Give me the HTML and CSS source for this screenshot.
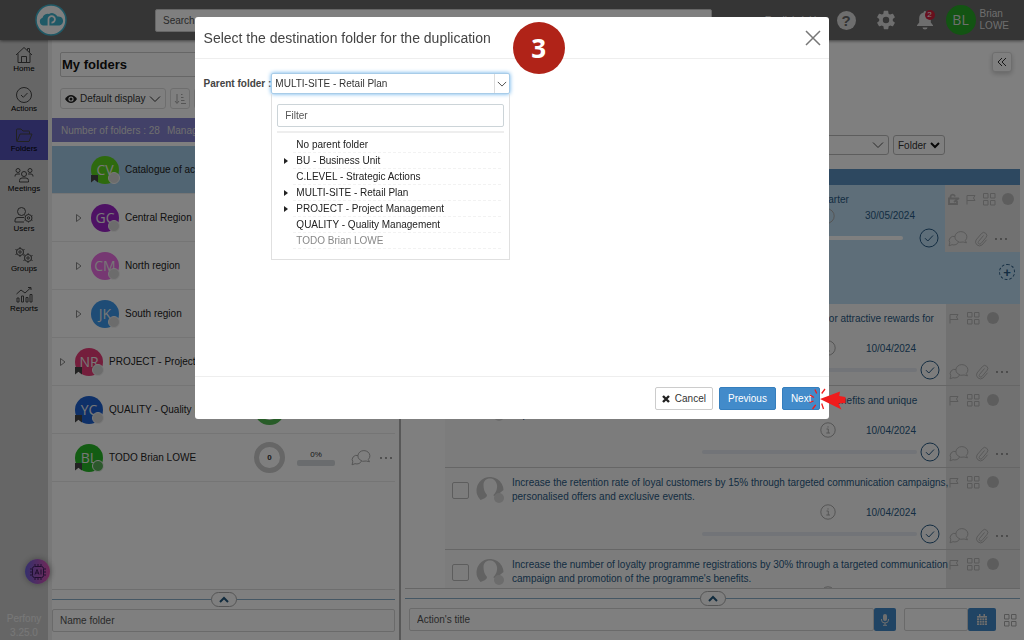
FILE: index.html
```html
<!DOCTYPE html>
<html lang="en">
<head>
    <meta charset="utf-8">
    <title>Perfony - My folders</title>
    <link rel="stylesheet" href="styles.css">
</head>
<body>
    <svg class="sprite" aria-hidden="true">
        <symbol id="chat" viewBox="0 0 20 16"><path d="M8.500 9.500A6 5.300 0 1 1 17.300 9.500L18.500 11.800L15.200 11A6 5.300 0 0 1 8.500 9.500M7 5.500A4.500 4.300 0 0 0 1.800 11.800L1 14.800L4 13.700A5 4.300 0 0 0 10.500 11"/></symbol>
        <symbol id="clip" viewBox="0 0 14 16"><path d="M9.500 4.500L4.500 10.500A1.500 1.500 0 0 0 7 12.500L12 6.500A3 3 0 0 0 7.500 2.500L2 9A4 4 0 0 0 8 14L12.500 8.800"/></symbol>
        <symbol id="flag" viewBox="0 0 10 12"><path d="M1 11.500V2.500H9L7.500 5L9 7.500H1"/></symbol>
        <symbol id="grid" viewBox="0 0 14 14"><path d="M1.500 1.500H6V6H1.500ZM8.500 1.500H13V6H8.500ZM1.500 8.500H6V13H1.500ZM8.500 8.500H13V13H8.500Z"/></symbol>
        <symbol id="dots" viewBox="0 0 14 4"><circle cx="2" cy="2" r=".9"/><circle cx="7" cy="2" r=".9"/><circle cx="12" cy="2" r=".9"/></symbol>
        <symbol id="check" viewBox="0 0 20 20"><circle cx="10" cy="10" r="9"/><path d="M6 10.200L8.800 13L14 7.500"/></symbol>
        <symbol id="info" viewBox="0 0 16 16"><circle cx="8" cy="8" r="7.200"/><path d="M6.500 7H8.300V11M6.300 11H10M8 4.300V5.600"/></symbol>
        <symbol id="down" viewBox="0 0 12 8"><path d="M1 1.500L6 6.500L11 1.500"/></symbol>
        <symbol id="up" viewBox="0 0 10 8"><path d="M1 6L5 2L9 6"/></symbol>
        <symbol id="tri" viewBox="0 0 8 10"><path d="M1.500 1.500L6 5L1.500 8.500Z"/></symbol>
        <symbol id="person" viewBox="0 0 28 28"><path d="M4.500 24A13.500 13.500 0 1 1 27.500 14L22 18.500C20 20 17.500 20.500 17.500 19C20 16.500 21.500 13 21 9C20 4 17 2.500 14 2.500C10 2.500 7.500 5 7.500 9C7.500 13 8.500 16 11 19C11 21.500 8 22.500 4.500 24Z"/><circle cx="23" cy="22" r="5" fill="#d8d8d8"/></symbol>
        <symbol id="gear" viewBox="0 0 24 24"><path d="M19.400 13a7.500 7.500 0 0 0 0-2l2.100-1.600a.5.5 0 0 0 .1-.7l-2-3.400a.5.5 0 0 0-.6-.2l-2.500 1a7.300 7.300 0 0 0-1.700-1l-.4-2.600A.5.5 0 0 0 14 2h-4a.5.5 0 0 0-.5.400l-.4 2.700a7.300 7.300 0 0 0-1.600 1l-2.500-1a.5.5 0 0 0-.6.200l-2 3.400a.5.500 0 0 0 .1.700L4.600 11a7.500 7.500 0 0 0 0 2l-2.100 1.600a.5.500 0 0 0-.1.700l2 3.400a.5.500 0 0 0 .6.200l2.500-1a7.300 7.300 0 0 0 1.700 1l.4 2.700a.5.500 0 0 0 .4.400h4a.5.500 0 0 0 .5-.4l.4-2.700a7.300 7.300 0 0 0 1.600-1l2.500 1a.5.500 0 0 0 .6-.2l2-3.400a.5.500 0 0 0-.1-.7zM12 15.500a3.500 3.500 0 1 1 0-7 3.500 3.500 0 0 1 0 7z"/></symbol>
    </svg>

    <header class="topbar">
        <a class="logo" href="#" aria-label="Perfony">
            <svg width="32" height="32" viewBox="0 0 32 32">
                <circle cx="16" cy="16" r="15" fill="#fff" stroke="#3fb2cc" stroke-width="1.500"/>
                <path d="M8 21.500A4 4 0 0 1 7.500 13.800A5.500 5.500 0 0 1 14 10A6 6 0 0 1 22.500 12.500A4.600 4.600 0 0 1 24.500 21.500Z" fill="#3fb2cc"/>
                <path d="M13.500 22V15.500A3.200 3.200 0 1 1 16.500 18.600" fill="none" stroke="#fff" stroke-width="1.800"/>
            </svg>
        </a>
        <input class="search" type="text" placeholder="Search..." aria-label="Search">
        <div class="top-tools">
            <a class="lang" href="#">English (uk)</a>
            <button class="icon-btn" aria-label="Help"><span class="help">?</span></button>
            <button class="icon-btn" aria-label="Settings"><svg class="solid" width="22" height="22"><use href="#gear"/></svg></button>
            <button class="icon-btn bell" aria-label="Notifications">
                <svg class="solid" width="18" height="20" viewBox="0 0 18 20"><path d="M9 1A1.300 1.300 0 0 1 10.300 2.500A5.800 5.800 0 0 1 14.800 8V12.500L17 15.200V16H1V15.200L3.200 12.500V8A5.800 5.800 0 0 1 7.700 2.500A1.300 1.300 0 0 1 9 1ZM6.500 17.500H11.500A2.500 2 0 0 1 6.500 17.500Z"/></svg>
                <span class="count">2</span>
            </button>
            <a class="profile" href="#"><span class="avatar-lg">BL</span><span>Brian<br>LOWE</span></a>
        </div>
    </header>

    <div class="main">
        <nav class="sidebar">
            <a href="#"><svg class="line" width="18" height="18" viewBox="0 0 18 18"><path d="M1 9L9 1.500L17 9M3 7.500V16.500H15V7.500M12.500 4.500V2.500H14.500V6.500M6.500 16.500V10.500H11.500V16.500"/></svg>Home</a>
            <a href="#"><svg class="line" width="18" height="18" viewBox="0 0 18 18"><circle cx="9" cy="9" r="7.500"/><path d="M6 9L8.300 11.300L12.500 7"/></svg>Actions</a>
            <a href="#" class="active"><svg class="line" width="18" height="18" viewBox="0 0 18 18"><path d="M1.500 14.500V4Q1.500 3 2.500 3H6L8 5H13.500Q14.500 5 14.500 6V8M1.500 14.500Q1.500 15.500 2.500 15.500H14L17 8H5L2 15.500"/></svg>Folders</a>
            <a href="#"><svg class="line" width="20" height="18" viewBox="0 0 20 18"><circle cx="10" cy="8" r="2.500"/><circle cx="4" cy="4.500" r="2"/><circle cx="16" cy="4.500" r="2"/><path d="M5.500 16V14.500Q5.500 12 8 12H12Q14.500 12 14.500 14.500V16ZM1 10.500V10Q1 8 3 8H6M19 10.500V10Q19 8 17 8H14"/></svg>Meetings</a>
            <a href="#"><svg class="line" width="20" height="18" viewBox="0 0 20 18"><circle cx="7.500" cy="5.500" r="4"/><path d="M10 16H1V14Q1 11.500 4 11.500H10"/><circle cx="14.500" cy="12" r="3.500"/><circle cx="14.500" cy="12" r="1.200"/><path d="M14.500 7.500V8.500M14.500 15.500V16.500M10.500 9.800L11.500 10.300M17.500 13.700L18.500 14.200M10.500 14.200L11.500 13.700M17.500 10.300L18.500 9.800"/></svg>Users</a>
            <a href="#"><svg class="line" width="20" height="18" viewBox="0 0 20 18"><circle cx="6" cy="6" r="3.500"/><circle cx="6" cy="6" r="1.200"/><circle cx="14" cy="12" r="3.500"/><circle cx="14" cy="12" r="1.200"/><path d="M6 1V2.500M6 9.500V11M1.500 3.500L3 4.300M9 7.700L10.500 8.500M1.500 8.500L3 7.700M9 4.300L10.500 3.500M14 7V8.500M14 15.500V17M9.500 14.500L11 13.700M17 10.300L18.500 9.500M9.500 9.500L11 10.300M17 13.700L18.500 14.500"/></svg>Groups</a>
            <a href="#"><svg class="line" width="18" height="18" viewBox="0 0 18 18"><path d="M2 16V12H4V16ZM6.500 16V10H8.500V16ZM11 16V11.500H13V16ZM15 16V8.500H17V16ZM1.500 8L6 4L10 7L16 1.500M13 1.500H16V4"/></svg>Reports</a>
            <div class="ai">
                <svg class="line" width="18" height="18" viewBox="0 0 18 18"><rect x="3.500" y="3.500" width="11" height="11" rx="2"/><path d="M6 1V3M9 1V3M12 1V3M6 15V17M9 15V17M12 15V17M1 6H3M1 9H3M1 12H3M15 6H17M15 9H17M15 12H17M6 11.500L8 6.500L10 11.500M6.700 10H9.300M12 6.500V11.500"/></svg>
            </div>
            <p class="version">Perfony<br>3.25.0</p>
        </nav>

        <section class="folders">
            <input class="view-name" type="text" value="My folders" aria-label="View name">
            <div class="view-tools">
                <button class="display-btn">
                    <svg width="12" height="10" viewBox="0 0 12 10"><path d="M0 5Q2.500 1 6 1T12 5Q9.500 9 6 9T0 5Z" fill="#222"/><circle cx="6" cy="5" r="2.600" fill="#fff"/><circle cx="6" cy="5" r="1.500" fill="#222"/></svg>
                    Default display
                    <svg class="line" width="12" height="8"><use href="#down"/></svg>
                </button>
                <button class="sort-btn" aria-label="Sort"><svg class="line" width="12" height="12" viewBox="0 0 12 12"><path d="M3 1V10M1 8L3 10.500L5 8M7 10.500H12M7 7.500H10.500M7 4.500H9.500M7 1.500H8.500"/></svg></button>
                <button class="sort-btn" aria-label="Options"></button>
            </div>
            <div class="count-bar"><span>Number of folders : 28</span><span>Manage</span></div>
            <ul class="folder-list">
                <li class="sub selected"><span class="avatar green-light mark">CV<i></i></span><span class="name">Catalogue of actions</span></li>
                <li class="sub"><svg class="tri" width="8" height="10"><use href="#tri"/></svg><span class="avatar purple">GC<i></i></span><span class="name">Central Region</span></li>
                <li class="sub"><svg class="tri" width="8" height="10"><use href="#tri"/></svg><span class="avatar pink">CM<i></i></span><span class="name">North region</span></li>
                <li class="sub"><svg class="tri" width="8" height="10"><use href="#tri"/></svg><span class="avatar sky">JK<i></i></span><span class="name">South region</span></li>
                <li><svg class="tri" width="8" height="10"><use href="#tri"/></svg><span class="avatar rose mark">NR<i></i></span><span class="name">PROJECT - Project...</span></li>
                <li>
                    <span class="avatar blue mark">YC<i></i></span><span class="name">QUALITY - Quality M...</span>
                    <span class="ring ring-green">4</span>
                    <span class="rate">40%<b><em style="width: 40%"></em></b></span>
                    <svg class="line pale" width="20" height="16"><use href="#chat"/></svg><svg class="dots" width="14" height="4"><use href="#dots"/></svg>
                </li>
                <li>
                    <span class="avatar green mark online">BL<i></i></span><span class="name">TODO Brian LOWE</span>
                    <span class="ring">0</span>
                    <span class="rate">0%<b></b></span>
                    <svg class="line pale" width="20" height="16"><use href="#chat"/></svg><svg class="dots" width="14" height="4"><use href="#dots"/></svg>
                </li>
            </ul>
            <div class="fold"><button aria-label="Expand"><svg width="10" height="8"><use href="#up"/></svg></button></div>
            <input class="field" type="text" placeholder="Name folder" aria-label="Name folder">
        </section>

        <section class="actions">
            <button class="collapse" aria-label="Collapse"><svg class="line" width="10" height="10" viewBox="0 0 10 10"><path d="M5 1L1 5L5 9M9 1L5 5L9 9"/></svg></button>
            <div class="filters">
                <select class="wide" aria-label="Filter actions"><option></option></select>
                <select class="scope" aria-label="Scope"><option>Folder</option></select>
            </div>
            <div class="blue-bar"></div>
            <div class="task-list">
                <article class="task current">
                    <div class="task-body">
                        <p class="task-title">Increase the sales of the retail network by 10% before the end of the quarter</p>
                        <div class="task-date"><svg class="line" width="16" height="16"><use href="#info"/></svg><time>30/05/2024</time></div>
                        <div class="task-progress"><b></b><svg class="line" width="20" height="20"><use href="#check"/></svg></div>
                    </div>
                    <div class="task-tools">
                        <div>
                            <svg class="line" width="12" height="12" viewBox="0 0 12 12"><path d="M1 5.500H9V11H1ZM2.500 5.500V3.500A2.300 2.300 0 0 1 7 3.500M6 9L11 5" stroke-width="1.800"/></svg>
                            <svg class="line" width="10" height="12"><use href="#flag"/></svg><svg class="line" width="14" height="14"><use href="#grid"/></svg><span class="dot"></span>
                        </div>
                        <div><svg class="line" width="20" height="16"><use href="#chat"/></svg><svg class="line" width="14" height="16"><use href="#clip"/></svg><svg class="dots" width="14" height="4"><use href="#dots"/></svg></div>
                    </div>
                </article>
                <div class="task-add"><button aria-label="Add action">+</button></div>
                <article class="task">
                    <div class="task-body">
                        <label class="pick"><input type="checkbox" aria-label="Select action"><svg width="28" height="28"><use href="#person"/></svg></label>
                        <p class="task-title">Set up a sponsorship scheme for the regular customers, with discounts or attractive rewards for<br>each new member.</p>
                        <div class="task-date"><svg class="line" width="16" height="16"><use href="#info"/></svg><time>10/04/2024</time></div>
                        <div class="task-progress"><b></b><svg class="line" width="20" height="20"><use href="#check"/></svg></div>
                    </div>
                    <div class="task-tools">
                        <div><svg class="line" width="10" height="12"><use href="#flag"/></svg><svg class="line" width="14" height="14"><use href="#grid"/></svg><span class="dot"></span></div>
                        <div><svg class="line" width="20" height="16"><use href="#chat"/></svg><svg class="line" width="14" height="16"><use href="#clip"/></svg><svg class="dots" width="14" height="4"><use href="#dots"/></svg></div>
                    </div>
                </article>
                <article class="task">
                    <div class="task-body">
                        <label class="pick"><input type="checkbox" aria-label="Select action"><svg width="28" height="28"><use href="#person"/></svg></label>
                        <p class="task-title">Launch a new loyalty programme in every regional shop, with exclusive benefits and unique<br>experiences.</p>
                        <div class="task-date"><svg class="line" width="16" height="16"><use href="#info"/></svg><time>10/04/2024</time></div>
                        <div class="task-progress"><b></b><svg class="line" width="20" height="20"><use href="#check"/></svg></div>
                    </div>
                    <div class="task-tools">
                        <div><svg class="line" width="10" height="12"><use href="#flag"/></svg><svg class="line" width="14" height="14"><use href="#grid"/></svg><span class="dot"></span></div>
                        <div><svg class="line" width="20" height="16"><use href="#chat"/></svg><svg class="line" width="14" height="16"><use href="#clip"/></svg><svg class="dots" width="14" height="4"><use href="#dots"/></svg></div>
                    </div>
                </article>
                <article class="task">
                    <div class="task-body">
                        <label class="pick"><input type="checkbox" aria-label="Select action"><svg width="28" height="28"><use href="#person"/></svg></label>
                        <p class="task-title">Increase the retention rate of loyal customers by 15% through targeted communication campaigns,<br>personalised offers and exclusive events.</p>
                        <div class="task-date"><svg class="line" width="16" height="16"><use href="#info"/></svg><time>10/04/2024</time></div>
                        <div class="task-progress"><b></b><svg class="line" width="20" height="20"><use href="#check"/></svg></div>
                    </div>
                    <div class="task-tools">
                        <div><svg class="line" width="10" height="12"><use href="#flag"/></svg><svg class="line" width="14" height="14"><use href="#grid"/></svg><span class="dot"></span></div>
                        <div><svg class="line" width="20" height="16"><use href="#chat"/></svg><svg class="line" width="14" height="16"><use href="#clip"/></svg><svg class="dots" width="14" height="4"><use href="#dots"/></svg></div>
                    </div>
                </article>
                <article class="task">
                    <div class="task-body">
                        <label class="pick"><input type="checkbox" aria-label="Select action"><svg width="28" height="28"><use href="#person"/></svg></label>
                        <p class="task-title">Increase the number of loyalty programme registrations by 30% through a targeted communication<br>campaign and promotion of the programme's benefits.</p>
                        <div class="task-date"><svg class="line" width="16" height="16"><use href="#info"/></svg></div>
                    </div>
                    <div class="task-tools">
                        <div><svg class="line" width="10" height="12"><use href="#flag"/></svg><svg class="line" width="14" height="14"><use href="#grid"/></svg><span class="dot"></span></div>
                    </div>
                </article>
            </div>
            <div class="fold"><button aria-label="Expand"><svg width="10" height="8"><use href="#up"/></svg></button></div>
            <form class="new-action">
                <input class="field title-field" type="text" placeholder="Action's title" aria-label="Action's title">
                <button type="button" class="mic" aria-label="Dictate"><svg width="10" height="12" viewBox="0 0 10 12"><rect x="3" y="0" width="4" height="7" rx="2" fill="#ddd"/><path d="M1.500 5V6A3.500 3 0 0 0 8.500 6V5M5 9V11M3 11.300H7" fill="none" stroke="#ddd"/></svg></button>
                <input class="field date-field" type="text" aria-label="Due date">
                <button type="button" class="calendar" aria-label="Pick a date"><svg width="10" height="11" viewBox="0 0 10 11"><path d="M0 2H10V11H0ZM2 0H3.500V2H2ZM6.500 0H8V2H6.500Z" fill="#ddd"/><path d="M0 4H10M0 6.500H10M0 9H10M2.500 4V11M5 4V11M7.500 4V11" stroke="#337ab7" stroke-width=".6"/></svg></button>
                <svg class="line pale" width="14" height="14"><use href="#grid"/></svg>
            </form>
        </section>
    </div>

    <div class="overlay">
        <div class="modal" role="dialog" aria-labelledby="modal-title">
            <div class="modal-header">
                <h2 id="modal-title">Select the destination folder for the duplication</h2>
                <button class="close" aria-label="Close"><svg width="16" height="16" viewBox="0 0 16 16"><path d="M1 1L15 15M15 1L1 15"/></svg></button>
                <span class="step">3</span>
            </div>
            <div class="modal-body">
                <label for="parent">Parent folder :</label>
                <div class="combo">
                    <select id="parent"><option>MULTI-SITE - Retail Plan</option></select>
                    <span class="combo-arrow"><svg class="line" width="10" height="8" viewBox="0 0 12 8"><use href="#down"/></svg></span>
                    <div class="combo-panel">
                        <input class="field" type="text" placeholder="Filter" aria-label="Filter">
                        <ul>
                            <li>No parent folder</li>
                            <li class="parent">BU - Business Unit</li>
                            <li>C.LEVEL - Strategic Actions</li>
                            <li class="parent">MULTI-SITE - Retail Plan</li>
                            <li class="parent">PROJECT - Project Management</li>
                            <li>QUALITY - Quality Management</li>
                            <li class="disabled">TODO Brian LOWE</li>
                        </ul>
                    </div>
                </div>
            </div>
            <div class="modal-footer">
                <button class="btn"><svg width="8" height="8" viewBox="0 0 8 8"><path d="M1 1L7 7M7 1L1 7" stroke="#222" stroke-width="2.400"/></svg>Cancel</button>
                <button class="btn primary">Previous</button>
                <button class="btn primary">Next</button>
                <svg class="pointer" width="42" height="28" viewBox="0 0 42 28">
                    <path d="M14 14L34 6.500L33.200 11L39.500 12V18L32.500 18.500L35.500 24.500Z" fill="#f01c1c"/>
                    <path d="M9 4.500L10.700 8.500M19 4L15.700 8.500M4 10L8 12.500M3.500 17.500L7.500 16M6.500 24L9.700 19.800M15.700 18.500L17.500 24" fill="none" stroke="#f01c1c" stroke-width="1.300"/>
                </svg>
            </div>
        </div>
    </div>
</body>
</html>
```

FILE: styles.css
```css
* {
    box-sizing: border-box;
}

body {
    display: flex;
    flex-direction: column;
    height: 100vh;
    margin: 0;
    overflow: hidden;
    background-color: #fff;
    color: #333;
    font-family: "Liberation Sans", Arial, sans-serif;
    font-size: 10px;
}

button, input, select {
    font: inherit;
    color: inherit;
}

button {
    cursor: pointer;
}

a {
    color: inherit;
    text-decoration: none;
}

p, h2, ul {
    margin: 0;
    padding: 0;
    list-style: none;
}

svg {
    flex: none;
    display: block;
}

.sprite {
    position: absolute;
    width: 0;
    height: 0;
}

.line {
    fill: none;
    stroke: currentColor;
    stroke-width: 1;
}

.pale {
    color: #aaa;
}

/* top bar */
.topbar {
    display: flex;
    align-items: center;
    flex: none;
    height: 40px;
    padding: 0 15px 0 35px;
    background-color: #6a6a6a;
    color: #ddd;
    box-shadow: 0 1px 3px rgba(0, 0, 0, 0.5);
    z-index: 1;
}

.search {
    width: 557px;
    height: 23px;
    margin-left: 88px;
    padding: 0 7px;
    border: 1px solid #ccc;
    border-radius: 2px;
    background-color: #fff;
}

.top-tools {
    display: flex;
    align-items: center;
    gap: 19px;
    margin-left: auto;
}

.icon-btn {
    position: relative;
    display: flex;
    padding: 0;
    border: none;
    background: none;
    color: #ddd;
}

.solid {
    fill: currentColor;
}

.help {
    width: 19px;
    height: 19px;
    border-radius: 50%;
    background-color: #ddd;
    color: #666;
    font-size: 15px;
    font-weight: bold;
    line-height: 19px;
}

.count {
    position: absolute;
    top: 0;
    right: -1px;
    width: 10px;
    height: 10px;
    border-radius: 50%;
    background-color: #d0203c;
    color: #fff;
    font-size: 8px;
    line-height: 10px;
}

.profile {
    display: flex;
    align-items: center;
    gap: 4px;
    margin-left: -7px;
    line-height: 12px;
}

.avatar-lg {
    width: 30px;
    height: 30px;
    border-radius: 50%;
    background-color: #26a826;
    font: 14px/30px "Open Sans", sans-serif;
    text-align: center;
}

.main {
    display: flex;
    flex: 1;
    min-height: 0;
    background-color: #f0f0f0;
}

/* sidebar */
.sidebar {
    position: relative;
    display: flex;
    flex-direction: column;
    flex: none;
    width: 48px;
    background-color: #cdcdcd;
    color: #000;
    font-size: 8px;
    text-align: center;
}

.sidebar a {
    display: flex;
    flex-direction: column;
    align-items: center;
    height: 40px;
    padding-top: 6px;
    line-height: 9px;
}

.sidebar a svg {
    color: #444;
}

.sidebar .active {
    background-color: #5452b8;
}

.ai {
    position: absolute;
    right: -2px;
    bottom: 56px;
    display: flex;
    align-items: center;
    justify-content: center;
    width: 25px;
    height: 25px;
    border-radius: 50%;
    background: linear-gradient(90deg, #6a60d8, #e050b0);
    color: #402060;
    box-shadow: 0 0 6px #888;
}

.version {
    margin-top: auto;
    color: #f0f0f0;
    font-size: 10px;
    line-height: 14px;
}

/* folders column */
.folders {
    display: flex;
    flex-direction: column;
    flex: none;
    width: 347px;
    padding: 12px 4px 8px 0;
    margin-left: 4px;
    background-color: #fff;
}

.view-name {
    height: 25px;
    margin: 0 8px;
    padding: 0 1px;
    border: 1px solid #ccc;
    border-radius: 2px;
    background: none;
    color: #111;
    font-size: 13px;
    font-weight: bold;
}

.view-tools {
    display: flex;
    gap: 4px;
    margin: 11px 8px 9px;
}

.display-btn, .sort-btn {
    display: flex;
    align-items: center;
    gap: 3px;
    height: 21px;
    padding: 0 4px;
    border: 1px solid #ddd;
    border-radius: 3px;
    background: none;
}

.sort-btn {
    width: 20px;
    padding: 0 3px;
    color: #aaa;
}

.count-bar {
    display: flex;
    align-items: center;
    gap: 7px;
    height: 24px;
    margin-bottom: 4px;
    padding: 0 9px;
    background-color: #8583d0;
    color: #ddd;
}

.folder-list {
    flex: 1;
    border-bottom: 1px solid #ddd;
}

.folder-list li {
    display: flex;
    align-items: center;
    height: 48px;
    padding-left: 23px;
    border-bottom: 1px solid #eaeaea;
}

.folder-list .sub {
    padding-left: 39px;
}

.folder-list .selected {
    background-color: #a2cae6;
}

.tri {
    width: 8px;
    margin-left: -16px;
    margin-right: 8px;
    fill: none;
    stroke: #888;
}

.avatar {
    position: relative;
    flex: none;
    width: 28px;
    height: 28px;
    margin-right: 6px;
    border-radius: 50%;
    color: #eee;
    font: 14px/28px "Open Sans", sans-serif;
    text-align: center;
}

.avatar i {
    position: absolute;
    right: -1px;
    bottom: 0;
    width: 12px;
    height: 12px;
    border: 1px solid #f4f4f4;
    border-radius: 50%;
    background-color: #d8d8d8;
}

.avatar.online i {
    background-color: #58b058;
}

.mark::before {
    content: "";
    position: absolute;
    left: 0;
    bottom: 1px;
    width: 7px;
    height: 8px;
    background-color: #444;
    clip-path: polygon(0 0, 100% 0, 100% 100%, 50% 65%, 0 100%);
}

.green-light { background-color: #5cd41c; }
.purple { background-color: #9c24c8; }
.pink { background-color: #ec70e4; }
.sky { background-color: #3c98ec; }
.rose { background-color: #e83c78; }
.blue { background-color: #1c60d0; }
.green { background-color: #26b826; }

.name {
    width: 145px;
    color: #222;
    white-space: nowrap;
}

.ring {
    width: 31px;
    height: 31px;
    border: 5px solid #ccc;
    border-radius: 50%;
    font-size: 8px;
    font-weight: bold;
    line-height: 21px;
    text-align: center;
}

.ring-green {
    border-color: #50b850;
}

.rate {
    width: 38px;
    margin: 0 16px 0 12px;
    font-size: 8px;
    line-height: 10px;
    text-align: center;
}

.rate b {
    display: block;
    height: 6px;
    border-radius: 2px;
    background-color: #d4d8dc;
}

.rate em {
    display: block;
    height: 6px;
    background-color: #50a8d0;
}

.dots {
    fill: #777;
}

.folder-list .dots {
    margin-left: 8px;
}

.fold {
    display: flex;
    align-items: center;
    justify-content: center;
    height: 19px;
    background: linear-gradient(#8aaec8, #8aaec8) center / 100% 1px no-repeat;
}

.fold button {
    display: flex;
    align-items: center;
    justify-content: center;
    width: 26px;
    height: 15px;
    padding: 0;
    border: 1px solid #aaa;
    border-radius: 8px;
    background-color: #fff;
}

.fold svg {
    fill: none;
    stroke: #24587c;
    stroke-width: 2;
}

.field {
    height: 23px;
    padding: 0 7px;
    border: 1px solid #d4d4d4;
    border-radius: 2px;
    background-color: #fff;
}

.field::placeholder, .search::placeholder {
    color: #555;
}

/* actions column */
.actions {
    position: relative;
    display: flex;
    flex-direction: column;
    flex: 1;
    min-width: 0;
    padding: 12px 4px 9px;
    border-left: 2px solid #b0b0b0;
    background-color: #fff;
}

.collapse {
    display: flex;
    align-items: center;
    justify-content: center;
    align-self: flex-end;
    width: 20px;
    height: 20px;
    margin-right: 8px;
    padding: 0;
    border: 1px solid #ddd;
    border-radius: 3px;
    background-color: #fff;
    box-shadow: 0 2px 5px #ccc;
}

.filters {
    display: flex;
    justify-content: flex-end;
    gap: 4px;
    margin: 63px 75px 14px 0;
}

.filters select {
    height: 20px;
    padding: 0 4px;
    border: 1px solid #bbb;
    border-radius: 3px;
    appearance: none;
    background: #fff url("data:image/svg+xml,%3Csvg xmlns='http://www.w3.org/2000/svg' width='12' height='8'%3E%3Cpath d='M1 1.500L6 6.500L11 1.500' fill='none' stroke='%23555'/%3E%3C/svg%3E") right 4px center no-repeat;
}

.filters .wide {
    width: 160px;
}

.filters .scope {
    width: 52px;
    background-image: url("data:image/svg+xml,%3Csvg xmlns='http://www.w3.org/2000/svg' width='10' height='8'%3E%3Cpath d='M1 2L5 6L9 2' fill='none' stroke='%23111' stroke-width='2'/%3E%3C/svg%3E");
}

.blue-bar {
    flex: none;
    height: 16px;
    background-color: #5a90c0;
}

.task-list {
    flex: 1;
    min-height: 0;
    overflow: hidden;
    border-bottom: 1px solid #ccc;
}

.task {
    display: flex;
    height: 82px;
    margin-left: 40px;
    border-bottom: 1px solid #ccc;
    background-color: #f8f8f8;
    color: #285a84;
}

.task-body {
    display: grid;
    grid-template-columns: 67px minmax(0, 1fr);
    grid-template-rows: 28px 16px 28px;
    flex: 1;
    min-width: 0;
    padding: 8px 6px 0 0;
}

.pick {
    display: flex;
    align-items: center;
    gap: 7px;
    height: 28px;
    padding-left: 7px;
}

.pick svg {
    fill: #c4c4c4;
}

.pick input {
    appearance: none;
    width: 17px;
    height: 17px;
    margin: 0;
    border: 1px solid #bbb;
    border-radius: 2px;
}

.task-title {
    position: relative;
    z-index: 1;
    grid-column: 2;
    line-height: 14px;
    white-space: nowrap;
}

.task-date {
    grid-column: 2;
    display: flex;
    align-items: center;
    justify-content: flex-end;
    gap: 30px;
    padding-right: 24px;
}

.task-date svg {
    color: #aaa;
}

.task-date svg:only-child {
    margin-right: 80px;
}

.task-progress {
    grid-column: 2;
    display: flex;
    align-items: center;
    justify-content: flex-end;
    gap: 3px;
}

.task-progress b {
    width: 215px;
    height: 4px;
    border-radius: 2px;
    background-color: #e4e8f0;
}

.task-tools {
    display: flex;
    flex-direction: column;
    justify-content: space-between;
    flex: none;
    width: 74px;
    padding: 7px 3px 5px;
    background-color: #e2e2e2;
    color: #b4b4b4;
}

.task-tools div {
    display: flex;
    align-items: center;
    gap: 7px;
}

.task-tools div:last-child:not(:first-child) {
    gap: 6px;
}

.dot {
    width: 12px;
    height: 12px;
    border-radius: 50%;
    background-color: #bbb;
}

.current {
    height: 67px;
    margin-left: 0;
    border-bottom: none;
    background-color: #bcdcf2;
}

.current .task-body {
    grid-template-columns: 107px minmax(0, 1fr);
    grid-template-rows: 13px 19px 25px;
}

.current .task-progress {
    gap: 16px;
}

.current .task-progress b {
    background-color: #fff;
}

.current .task-tools {
    width: 75px;
}

.current .task-tools div:first-child {
    gap: 6px;
}

.task-add {
    display: flex;
    align-items: flex-start;
    justify-content: flex-end;
    height: 52px;
    padding: 12px 5px;
    background-color: #bcdcf2;
}

.task-add button {
    width: 16px;
    height: 16px;
    padding: 0;
    border: 1px dashed #285a84;
    border-radius: 50%;
    background: none;
    color: #285a84;
    font-size: 13px;
    font-weight: bold;
    line-height: 13px;
}

.new-action {
    display: flex;
    align-items: center;
    padding: 0 3px 0 4px;
}

.title-field {
    flex: 1;
    min-width: 0;
}

.mic, .calendar {
    display: flex;
    align-items: center;
    justify-content: center;
    width: 22px;
    height: 23px;
    padding: 0;
    border: none;
    border-radius: 2px;
    background-color: #4088c8;
}

.date-field {
    width: 64px;
    margin-left: 8px;
}

.calendar {
    width: 28px;
    margin-right: 7px;
}

/* modal */
.overlay {
    position: fixed;
    inset: 0;
    z-index: 2;
    display: flex;
    align-items: flex-start;
    justify-content: center;
    padding-top: 17px;
    background-color: rgba(0, 0, 0, 0.5);
}

.modal {
    width: 62%;
    border-radius: 3px;
    background-color: #fff;
}

.modal-header {
    position: relative;
    display: flex;
    align-items: center;
    justify-content: space-between;
    height: 42px;
    padding: 0 8px 0 9px;
    border-bottom: 1px solid #eee;
}

.modal-header h2 {
    color: #444;
    font-size: 14px;
    font-weight: normal;
}

.close {
    padding: 0;
    border: none;
    background: none;
}

.close path {
    stroke: #777;
    stroke-width: 1.500;
}

.step {
    position: absolute;
    left: 318px;
    top: 5px;
    width: 52px;
    height: 52px;
    border-radius: 50%;
    background-color: #b02318;
    color: #fff;
    font: bold 26px/52px "Open Sans", sans-serif;
    text-align: center;
}

.modal-body {
    display: flex;
    min-height: 317px;
    padding: 14px 9px;
}

.modal-body label {
    color: #444;
    font-weight: bold;
    line-height: 21px;
}

.combo {
    position: relative;
    width: 239px;
}

.combo select {
    display: block;
    appearance: none;
    width: 100%;
    height: 21px;
    padding: 0 3px;
    border: 1px solid #a8cce8;
    border-radius: 2px;
    background-color: #fff;
    box-shadow: 0 0 4px #66afe9;
}

.combo-arrow {
    position: absolute;
    top: 1px;
    right: 1px;
    display: flex;
    align-items: center;
    justify-content: center;
    width: 15px;
    height: 19px;
    border-left: 1px solid #ddd;
    pointer-events: none;
}

.combo-panel {
    height: 166px;
    padding: 10px 5px;
    border: 1px solid #e0e0e0;
    border-top: none;
}

.combo-panel .field {
    display: block;
    width: 100%;
    border-color: #ccd4d8;
}

.combo-panel ul {
    margin-top: 4px;
    padding: 4px 3px 0 16px;
    border-top: 2px solid #eee;
}

.combo-panel li {
    position: relative;
    height: 16px;
    padding-left: 3px;
    border-bottom: 1px dashed #f2f2f2;
    color: #222;
    line-height: 16px;
}

.combo-panel .parent::before {
    content: "";
    position: absolute;
    left: -9px;
    top: 5px;
    border: 3px solid transparent;
    border-left: 4px solid #222;
    border-right: none;
}

.combo-panel .disabled {
    color: #888;
}

.modal-footer {
    position: relative;
    display: flex;
    justify-content: flex-end;
    gap: 6px;
    padding: 10px 9px 9px;
    border-top: 1px solid #eee;
}

.btn {
    display: flex;
    align-items: center;
    gap: 5px;
    height: 23px;
    padding: 0 6px;
    border: 1px solid #ccc;
    border-radius: 2px;
    background-color: #fff;
}

.primary {
    padding: 0 8px;
    border-color: #357ebd;
    background-color: #428bca;
    color: #fff;
}

.pointer {
    position: absolute;
    right: -19px;
    top: 8px;
}
```
